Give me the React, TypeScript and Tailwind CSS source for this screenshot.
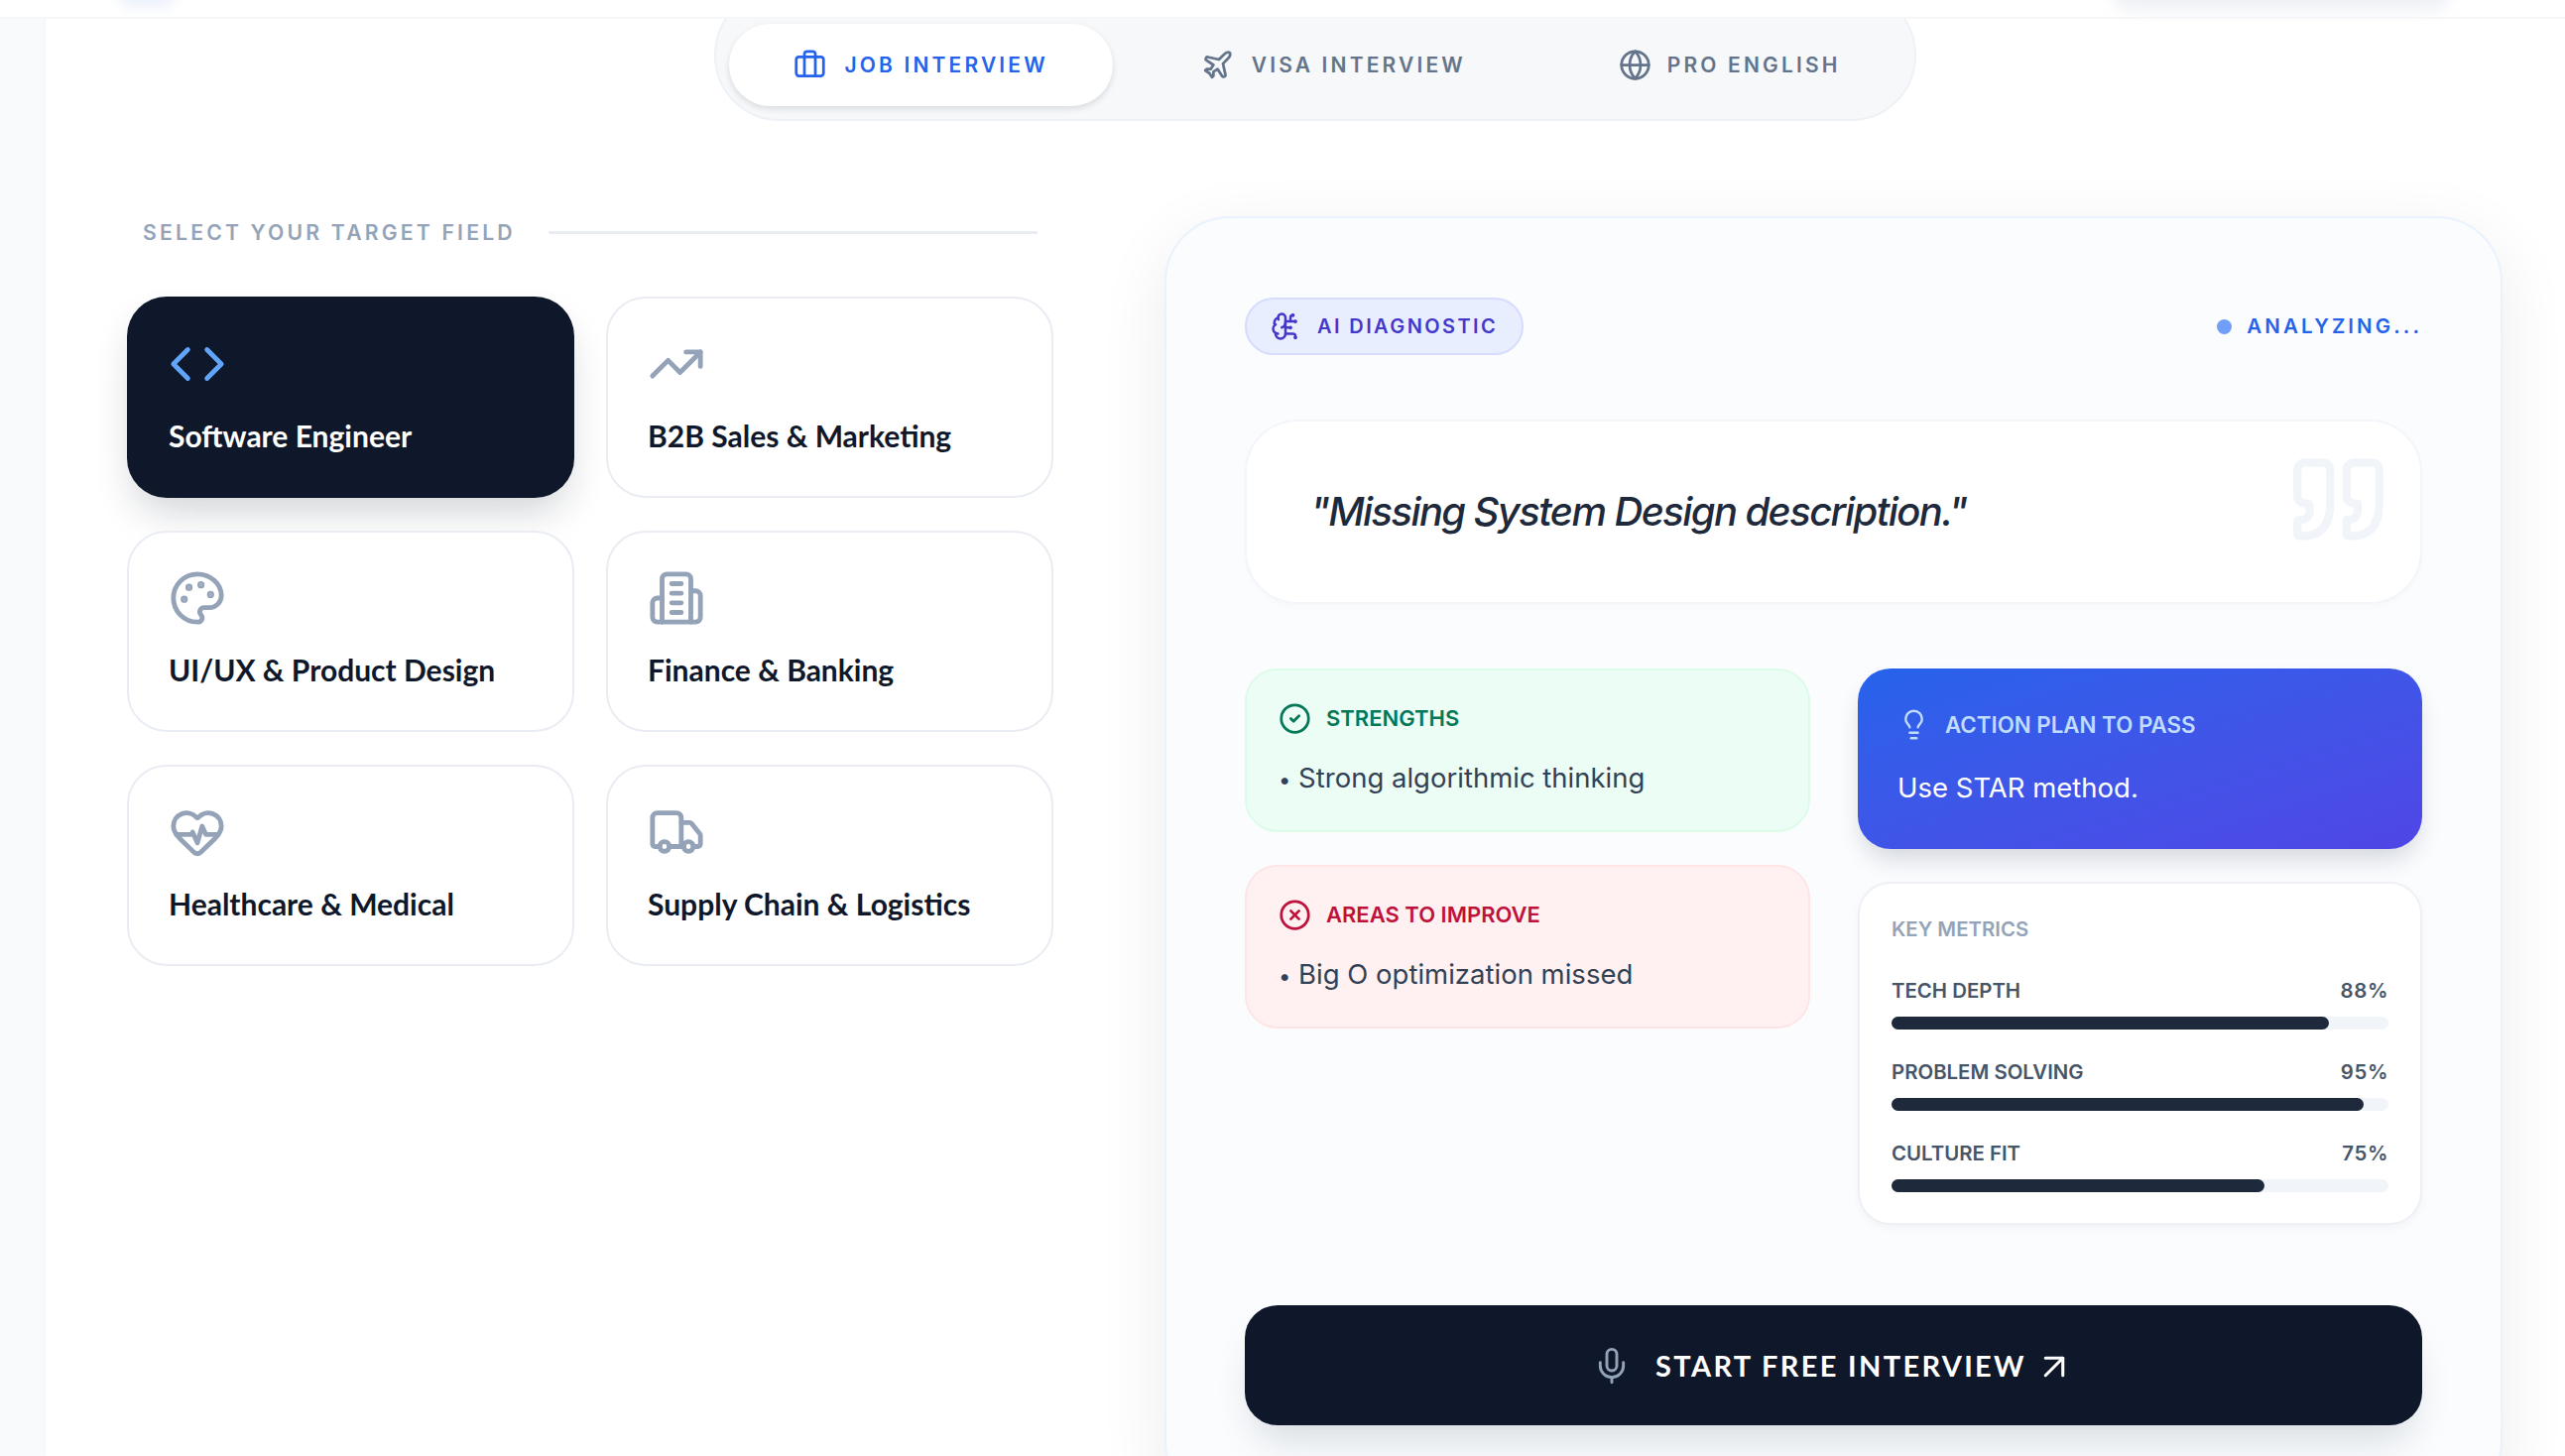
import React from 'react';
import {
  ArrowUpRight,
  BrainCircuit,
  Briefcase,
  CircleCheck,
  CircleX,
  Code,
  Globe,
  HeartPulse,
  Lightbulb,
  Mic,
  Palette,
  Plane,
  TrendingUp,
  Truck,
} from 'lucide-react';

type IconProps = { className?: string; strokeWidth?: number };

// Tower with wings, dashes down the middle
const TowerIcon: React.FC<IconProps> = ({ className, strokeWidth = 2 }) => (
  <svg viewBox="0 0 24 24" fill="none" stroke="currentColor" strokeWidth={strokeWidth} strokeLinecap="round" strokeLinejoin="round" className={className}>
    <path d="M6 22V4a2 2 0 0 1 2-2h8a2 2 0 0 1 2 2v18Z" />
    <path d="M6 12H4a2 2 0 0 0-2 2v6a2 2 0 0 0 2 2h2" />
    <path d="M18 9h2a2 2 0 0 1 2 2v9a2 2 0 0 1-2 2h-2" />
    <path d="M10 6h4" />
    <path d="M10 10h4" />
    <path d="M10 14h4" />
    <path d="M10 18h4" />
  </svg>
);

const QuoteMark: React.FC<IconProps> = ({ className, strokeWidth = 2 }) => (
  <svg viewBox="0 0 24 24" fill="none" stroke="currentColor" strokeWidth={strokeWidth} strokeLinecap="round" strokeLinejoin="round" className={className}>
    <path d="M3 21c3 0 7-1 7-8V5c0-1.25-.756-2.017-2-2H4c-1.25 0-2 .75-2 1.972V11c0 1.25.75 2 2 2 1 0 1 0 1 1v1c0 1-1 2-2 2s-1 .008-1 1.031V20c0 1 0 1 1 1z" />
    <path d="M15 21c3 0 7-1 7-8V5c0-1.25-.757-2.017-2-2h-4c-1.25 0-2 .75-2 1.972V11c0 1.25.75 2 2 2h.75c0 2.25.25 4-2.75 4v3c0 1 0 1 1 1z" />
  </svg>
);

const fields = [
  { label: 'Software Engineer', icon: Code, active: true },
  { label: 'B2B Sales & Marketing', icon: TrendingUp },
  { label: 'UI/UX & Product Design', icon: Palette },
  { label: 'Finance & Banking', icon: TowerIcon },
  { label: 'Healthcare & Medical', icon: HeartPulse },
  { label: 'Supply Chain & Logistics', icon: Truck },
];

const metrics = [
  { label: 'TECH DEPTH', value: 88 },
  { label: 'PROBLEM SOLVING', value: 95 },
  { label: 'CULTURE FIT', value: 75 },
];

const App: React.FC = () => {
  return (
    <div className="h-[1468px] overflow-hidden bg-[#f8fafc] font-['Inter',sans-serif]">
      {/* Top bar, only its lower edge is in view */}
      <header className="relative z-10 h-[19px] bg-white border-b-2 border-[#f6f7f9]">
        <div className="absolute left-[120px] -top-[14px] h-[22px] w-[56px] rounded-full bg-[#eef2fb] blur-[6px]" />
        <div className="absolute left-[2130px] -top-[24px] h-[34px] w-[340px] rounded-full bg-[#eef0f6] blur-[8px]" />
      </header>

      <main className="ml-[46px] h-[1449px] overflow-hidden bg-white shadow-[0_0_6px_rgba(15,23,42,0.03)]">
        {/* Mode tabs, scrolled partly under the bar */}
        <div className="flex justify-center pl-[20px] -mt-[30px]">
          <div className="flex h-[133px] items-end gap-[24px] rounded-[66px] border-2 border-[#eef2f6] bg-[#f6f8fa] pb-[13px] pl-[13px] pr-[9px]">
            <div className="flex h-[83px] items-center gap-[18px] rounded-[42px] bg-white px-[65px] shadow-[0_3px_6px_rgba(15,23,42,0.12)]">
              <Briefcase className="h-[33px] w-[33px] text-[#2563eb]" strokeWidth={2} />
              <span className="text-[21px] font-semibold tracking-[0.15em] whitespace-nowrap text-[#2563eb]">JOB INTERVIEW</span>
            </div>
            <div className="flex h-[83px] items-center gap-[18px] px-[65px]">
              <Plane className="h-[33px] w-[33px] text-[#64748b]" strokeWidth={2} />
              <span className="text-[21px] font-semibold tracking-[0.15em] whitespace-nowrap text-[#64748b]">VISA INTERVIEW</span>
            </div>
            <div className="flex h-[83px] items-center gap-[16px] px-[65px]">
              <Globe className="h-[33px] w-[33px] text-[#64748b]" strokeWidth={2} />
              <span className="text-[21px] font-semibold tracking-[0.15em] whitespace-nowrap text-[#64748b]">PRO ENGLISH</span>
            </div>
          </div>
        </div>

        <div className="mt-[96px] flex items-start pl-[82px]">
          {/* Field selection */}
          <section className="w-[934px] shrink-0 pt-[1px]">
            <div className="flex items-center gap-[33px] pl-[16px] pr-[16px]">
              <span className="text-[21.2px] font-semibold tracking-[0.15em] whitespace-nowrap text-[#94a3b8]">SELECT YOUR TARGET FIELD</span>
              <div className="h-[3px] flex-1 bg-[#e9edf3]" />
            </div>
            <div className="mt-[48px] grid grid-cols-2 gap-x-[32px] gap-y-[33px]">
              {fields.map((f) => {
                const Icon = f.icon;
                return (
                  <div
                    key={f.label}
                    className={
                      f.active
                        ? 'h-[203px] rounded-[40px] bg-[#0f172a] pl-[42px] pt-[39px] shadow-[0_20px_40px_-8px_rgba(15,23,42,0.2)]'
                        : 'h-[203px] rounded-[40px] border-2 border-[#e9edf3] bg-white pl-[40px] pt-[37px]'
                    }
                  >
                    <Icon
                      className={f.active ? 'h-[58px] w-[58px] text-[#60a5fa]' : 'h-[58px] w-[58px] text-[#94a3b8]'}
                      strokeWidth={2}
                    />
                    <div
                      className={
                        f.active
                          ? "mt-[23px] font-['Lato',sans-serif] text-[30px] font-bold leading-[40px] whitespace-nowrap text-white"
                          : "mt-[23px] font-['Lato',sans-serif] text-[30px] font-bold leading-[40px] whitespace-nowrap text-[#0f172a]"
                      }
                    >
                      {f.label}
                    </div>
                  </div>
                );
              })}
            </div>
          </section>

          {/* Diagnostic panel */}
          <section className="ml-[112px] w-[1349px] shrink-0 rounded-[66px] border-2 border-[#e9f2fd] bg-[#fafcfe] px-[79px] pt-[80px] pb-[80px] shadow-[0_20px_70px_rgba(15,23,42,0.08)]">
            <div className="flex items-center justify-between">
              <div className="flex h-[58px] items-center gap-[17px] rounded-full border-2 border-[#d5dcfe] bg-[#e9eeff] pl-[24px] pr-[24px]">
                <BrainCircuit className="h-[30px] w-[30px] text-[#4338ca]" strokeWidth={2} />
                <span className="text-[20px] font-semibold tracking-[0.12em] whitespace-nowrap text-[#4338ca]">AI DIAGNOSTIC</span>
              </div>
              <div className="flex items-center gap-[15px]">
                <span className="h-[15px] w-[15px] rounded-full bg-[#6f9ff8]" />
                <span className="text-[20.5px] font-semibold tracking-[0.15em] text-[#2563eb]">ANALYZING...</span>
              </div>
            </div>

            <div className="relative mt-[65px] flex h-[186px] items-center rounded-[53px] border-2 border-[#f2f6fa] bg-white pl-[64px] shadow-[0_3px_6px_rgba(15,23,42,0.02)]">
              <span className="text-[40px] font-medium italic tracking-[-0.04em] text-[#1e293b]">"Missing System Design description."</span>
              <QuoteMark className="absolute right-[33px] top-[29px] h-[99px] w-[99px] text-[#f1f5f9]" strokeWidth={2} />
            </div>

            <div className="mt-[65px] grid grid-cols-[570px_569px] gap-x-[48px]">
              <div className="flex flex-col gap-[33px]">
                <div className="h-[165px] rounded-[33px] border-2 border-[#dcfce7] bg-[#ecfdf5] pl-[32px] pt-[32px]">
                  <div className="flex items-center gap-[15px] text-[#047857]">
                    <CircleCheck className="h-[33px] w-[33px]" strokeWidth={2} />
                    <span className="text-[22px] font-semibold">STRENGTHS</span>
                  </div>
                  <div className="mt-[23px] text-[27.5px] leading-[40px] text-[#334155]"><span className="text-[22px]">•</span> Strong algorithmic thinking</div>
                </div>
                <div className="h-[165px] rounded-[33px] border-2 border-[#ffe4e6] bg-[#fff1f2] pl-[32px] pt-[32px]">
                  <div className="flex items-center gap-[15px] text-[#be123c]">
                    <CircleX className="h-[33px] w-[33px]" strokeWidth={2} />
                    <span className="text-[22px] font-semibold">AREAS TO IMPROVE</span>
                  </div>
                  <div className="mt-[23px] text-[27.5px] leading-[40px] text-[#334155]"><span className="text-[22px]">•</span> Big O optimization missed</div>
                </div>
              </div>

              <div className="flex flex-col gap-[33px]">
                <div className="h-[182px] rounded-[33px] bg-gradient-to-br from-[#2563eb] to-[#4f46e5] pl-[40px] pt-[40px] shadow-[0_14px_26px_-6px_rgba(15,23,42,0.18)]">
                  <div className="flex items-center gap-[15px] text-[#bfdbfe]">
                    <Lightbulb className="h-[33px] w-[33px]" strokeWidth={1.75} />
                    <span className="text-[22.3px] font-semibold">ACTION PLAN TO PASS</span>
                  </div>
                  <div className="mt-[27px] text-[27.5px] leading-[40px] text-white">Use STAR method.</div>
                </div>

                <div className="h-[346px] rounded-[33px] border-2 border-[#eef0f6] bg-white px-[32px] pt-[33px] shadow-[0_3px_8px_rgba(15,23,42,0.04)]">
                  <div className="text-[20.4px] font-semibold leading-[26px] text-[#94a3b8]">KEY METRICS</div>
                  <div className="mt-[36px] flex flex-col gap-[30px]">
                    {metrics.map((m) => (
                      <div key={m.label}>
                        <div className="flex justify-between text-[20.4px] font-semibold leading-[26px] text-[#475569]">
                          <span>{m.label}</span>
                          <span className="tracking-[0.03em]">{m.value}%</span>
                        </div>
                        <div className="mt-[13px] h-[13px] rounded-full bg-[#f1f5f9]">
                          <div className="h-full rounded-full bg-[#1e293b]" style={{ width: `${m.value}%` }} />
                        </div>
                      </div>
                    ))}
                  </div>
                </div>
              </div>
            </div>

            <div className="mt-[81px] flex h-[121px] items-center justify-center rounded-[33px] bg-[#0f172a] shadow-[0_24px_40px_-12px_rgba(15,23,42,0.16)]">
              <Mic className="h-[40px] w-[40px] text-[#94a3b8]" strokeWidth={1.75} />
              <span className="ml-[24px] font-['Lato',sans-serif] text-[29px] font-bold tracking-[0.08em] whitespace-nowrap text-white">START FREE INTERVIEW</span>
              <ArrowUpRight className="ml-[7px] mt-[3px] h-[42px] w-[42px] text-white" strokeWidth={1.75} />
            </div>
          </section>
        </div>
      </main>
    </div>
  );
};

export default App;
